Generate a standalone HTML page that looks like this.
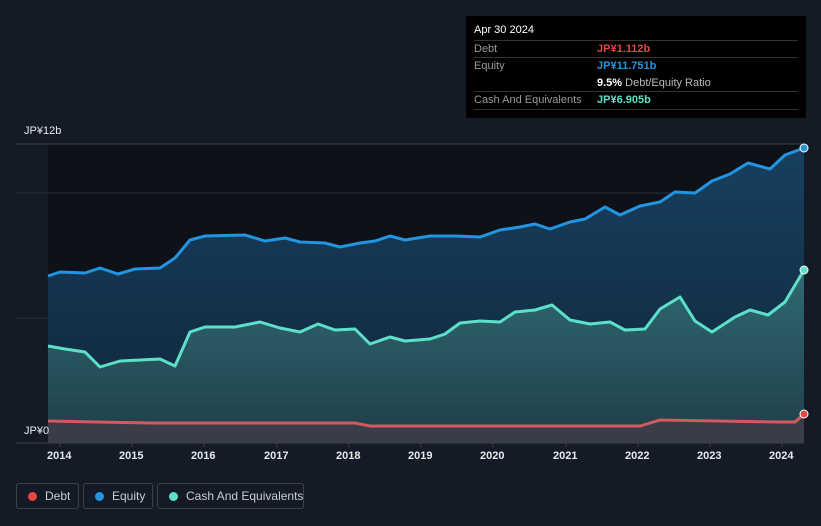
<!DOCTYPE html>
<html><head><meta charset="utf-8"><style>
body{margin:0;width:821px;height:526px;background:#151b26;font-family:"Liberation Sans",sans-serif;overflow:hidden;position:relative}
.tt{position:absolute;left:466px;top:16px;width:340px;height:102px;background:#000;color:#fff;font-size:11px}
.tt .r{position:absolute;left:8px;right:8px;border-top:1px solid #333;height:17px}
.tt .l{position:absolute;left:0;top:2px;color:#999}
.tt .v{position:absolute;left:123px;top:2px;font-weight:bold}
.leg{position:absolute;top:483px;height:26px;border:1px solid #3b414c;border-radius:3px;color:#c9ccd2;font-size:12px;box-sizing:border-box;line-height:24px;white-space:nowrap}
.leg i{position:absolute;left:11px;top:8px;width:9px;height:9px;border-radius:50%}
.leg span{position:absolute;left:28px;white-space:nowrap}
.yr{position:absolute;top:450px;color:#e6e8eb;font-size:11px;font-weight:bold}
</style></head><body>
<svg width="821" height="526" style="position:absolute;left:0;top:0">
<defs>
<linearGradient id="eg" x1="0" y1="0" x2="0" y2="1"><stop offset="0" stop-color="#17405f"/><stop offset="1" stop-color="#10253a"/></linearGradient>
<linearGradient id="cg" x1="0" y1="0" x2="0" y2="1"><stop offset="0" stop-color="#2f6a72"/><stop offset="1" stop-color="#1f3d47"/></linearGradient>
</defs>
<rect x="48" y="144" width="756" height="299" fill="#0e1117"/>
<line x1="16" y1="144" x2="804" y2="144" stroke="#3a3f47"/>
<line x1="16" y1="193" x2="804" y2="193" stroke="#2a2f38"/>
<line x1="16" y1="318" x2="804" y2="318" stroke="#2a2f38"/>
<path fill="url(#eg)" d="M48,276 L60,272 85,273 100,268 118,274 135,269 160,268 175,258 190,240 205,236 245,235 265,241 285,238 300,242 325,243 340,247 360,243 375,241 390,236 405,240 430,236 455,236 480,237 500,230 520,227 535,224 550,229 570,222 585,219 605,207 620,215 640,206 660,202 675,192 695,193 712,181 730,174 748,163 770,169 785,155 804,148 L804,443 48,443Z"/>
<path fill="url(#cg)" d="M48,346 L65,349 85,352 100,367 120,361 140,360 160,359 175,366 190,332 205,327 235,327 260,322 280,328 300,332 318,324 335,330 355,329 370,344 390,337 405,341 430,339 445,334 460,323 480,321 500,322 515,312 535,310 552,305 570,320 590,324 610,322 625,330 645,329 660,309 680,297 695,321 712,332 735,317 750,310 768,315 785,302 804,270 L804,443 48,443Z"/>
<path fill="#3a3d48" d="M48,421 L150,423 355,423 370,426 640,426 660,420 780,422 795,422 804,414 L804,443 48,443Z"/>
<path fill="none" stroke="#2394e0" stroke-width="3" stroke-linejoin="round" d="M48,276 L60,272 85,273 100,268 118,274 135,269 160,268 175,258 190,240 205,236 245,235 265,241 285,238 300,242 325,243 340,247 360,243 375,241 390,236 405,240 430,236 455,236 480,237 500,230 520,227 535,224 550,229 570,222 585,219 605,207 620,215 640,206 660,202 675,192 695,193 712,181 730,174 748,163 770,169 785,155 804,148"/>
<path fill="none" stroke="#5de0c8" stroke-width="3" stroke-linejoin="round" d="M48,346 L65,349 85,352 100,367 120,361 140,360 160,359 175,366 190,332 205,327 235,327 260,322 280,328 300,332 318,324 335,330 355,329 370,344 390,337 405,341 430,339 445,334 460,323 480,321 500,322 515,312 535,310 552,305 570,320 590,324 610,322 625,330 645,329 660,309 680,297 695,321 712,332 735,317 750,310 768,315 785,302 804,270"/>
<path fill="none" stroke="#d05a5e" stroke-width="3" d="M48,421 L150,423 355,423 370,426 640,426 660,420 780,422 795,422 804,414"/>
<line x1="16" y1="443" x2="804" y2="443" stroke="#3a3f47"/>
<g stroke="#3a3f47"><line x1="60" y1="443" x2="60" y2="447"/><line x1="132" y1="443" x2="132" y2="447"/><line x1="204" y1="443" x2="204" y2="447"/><line x1="277" y1="443" x2="277" y2="447"/><line x1="349" y1="443" x2="349" y2="447"/><line x1="421" y1="443" x2="421" y2="447"/><line x1="493" y1="443" x2="493" y2="447"/><line x1="566" y1="443" x2="566" y2="447"/><line x1="638" y1="443" x2="638" y2="447"/><line x1="710" y1="443" x2="710" y2="447"/><line x1="782" y1="443" x2="782" y2="447"/></g>
<circle cx="804" cy="148" r="4" fill="#2394e0" stroke="#fff" stroke-width="1"/>
<circle cx="804" cy="270" r="4" fill="#5de0c8" stroke="#fff" stroke-width="1"/>
<circle cx="804" cy="414" r="4" fill="#e84545" stroke="#fff" stroke-width="1"/>
</svg>
<div style="position:absolute;left:24px;top:125px;color:#e6e8eb;font-size:11px">JP¥12b</div>
<div style="position:absolute;left:24px;top:425px;color:#e6e8eb;font-size:11px">JP¥0</div>
<div class="yr" style="left:47px">2014</div><div class="yr" style="left:119px">2015</div><div class="yr" style="left:191px">2016</div><div class="yr" style="left:264px">2017</div><div class="yr" style="left:336px">2018</div><div class="yr" style="left:408px">2019</div><div class="yr" style="left:480px">2020</div><div class="yr" style="left:553px">2021</div><div class="yr" style="left:625px">2022</div><div class="yr" style="left:697px">2023</div><div class="yr" style="left:769px">2024</div>
<div class="tt">
<div style="position:absolute;left:8px;top:8px;font-size:11px">Apr 30 2024</div>
<div class="r" style="top:24px"><span class="l">Debt</span><span class="v" style="color:#e84545">JP¥1.112b</span></div>
<div class="r" style="top:41px"><span class="l">Equity</span><span class="v" style="color:#2394e0">JP¥11.751b</span></div>
<div style="position:absolute;left:131px;top:61px"><b>9.5%</b> <span style="color:#bbb">Debt/Equity Ratio</span></div>
<div class="r" style="top:75px"><span class="l">Cash And Equivalents</span><span class="v" style="color:#5de0c8">JP¥6.905b</span></div>
<div class="r" style="top:93px;height:0"></div>
</div>
<div class="leg" style="left:16px;width:63px"><i style="background:#e84545"></i><span>Debt</span></div>
<div class="leg" style="left:83px;width:70px"><i style="background:#2394e0"></i><span>Equity</span></div>
<div class="leg" style="left:157px;width:147px"><i style="background:#5de0c8"></i><span>Cash And Equivalents</span></div>
</body></html>
